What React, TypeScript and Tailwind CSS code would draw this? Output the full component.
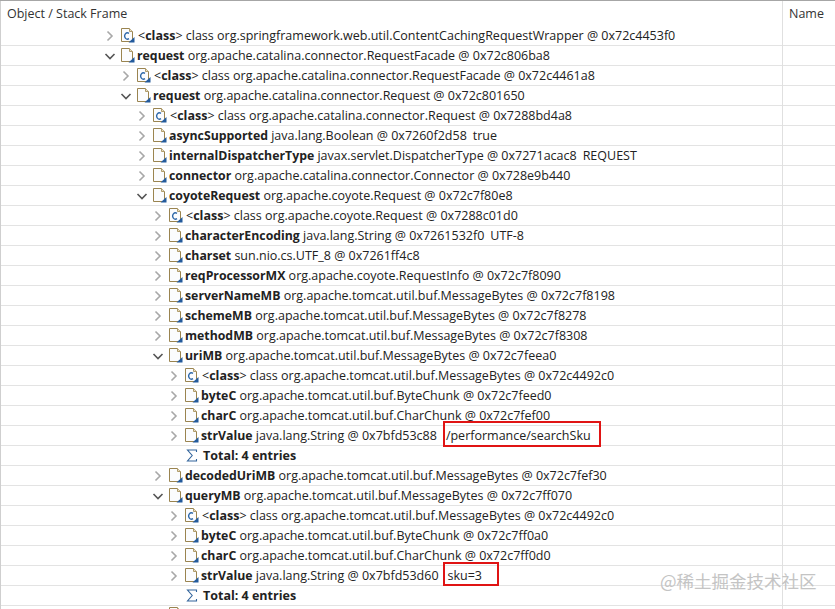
const depthClass: Record<number, string> = {
  0: "pl-[103px]",
  1: "pl-[119px]",
  2: "pl-[135px]",
  3: "pl-[151px]",
};

type Row = {
  d: number;
  k: "class" | "field" | "total";
  open?: boolean;
  name?: string;
  type?: string;
  value?: string;
  box?: "uri" | "sku";
};

const rows: Row[] = [
  { d: 0, k: "class", type: "class org.springframework.web.util.ContentCachingRequestWrapper @ 0x72c4453f0" },
  { d: 0, k: "field", open: true, name: "request", type: "org.apache.catalina.connector.RequestFacade @ 0x72c806ba8" },
  { d: 1, k: "class", type: "class org.apache.catalina.connector.RequestFacade @ 0x72c4461a8" },
  { d: 1, k: "field", open: true, name: "request", type: "org.apache.catalina.connector.Request @ 0x72c801650" },
  { d: 2, k: "class", type: "class org.apache.catalina.connector.Request @ 0x7288bd4a8" },
  { d: 2, k: "field", name: "asyncSupported", type: "java.lang.Boolean @ 0x7260f2d58", value: "true" },
  { d: 2, k: "field", name: "internalDispatcherType", type: "javax.servlet.DispatcherType @ 0x7271acac8", value: "REQUEST" },
  { d: 2, k: "field", name: "connector", type: "org.apache.catalina.connector.Connector @ 0x728e9b440" },
  { d: 2, k: "field", open: true, name: "coyoteRequest", type: "org.apache.coyote.Request @ 0x72c7f80e8" },
  { d: 3, k: "class", type: "class org.apache.coyote.Request @ 0x7288c01d0" },
  { d: 3, k: "field", name: "characterEncoding", type: "java.lang.String @ 0x7261532f0", value: "UTF-8" },
  { d: 3, k: "field", name: "charset", type: "sun.nio.cs.UTF_8 @ 0x7261ff4c8" },
  { d: 3, k: "field", name: "reqProcessorMX", type: "org.apache.coyote.RequestInfo @ 0x72c7f8090" },
  { d: 3, k: "field", name: "serverNameMB", type: "org.apache.tomcat.util.buf.MessageBytes @ 0x72c7f8198" },
  { d: 3, k: "field", name: "schemeMB", type: "org.apache.tomcat.util.buf.MessageBytes @ 0x72c7f8278" },
  { d: 3, k: "field", name: "methodMB", type: "org.apache.tomcat.util.buf.MessageBytes @ 0x72c7f8308" },
  { d: 3, k: "field", open: true, name: "uriMB", type: "org.apache.tomcat.util.buf.MessageBytes @ 0x72c7feea0" },
  { d: 4, k: "class", type: "class org.apache.tomcat.util.buf.MessageBytes @ 0x72c4492c0" },
  { d: 4, k: "field", name: "byteC", type: "org.apache.tomcat.util.buf.ByteChunk @ 0x72c7feed0" },
  { d: 4, k: "field", name: "charC", type: "org.apache.tomcat.util.buf.CharChunk @ 0x72c7fef00" },
  { d: 4, k: "field", name: "strValue", type: "java.lang.String @ 0x7bfd53c88", value: "/performance/searchSku", box: "uri" },
  { d: 4, k: "total", name: "Total: 4 entries" },
  { d: 3, k: "field", name: "decodedUriMB", type: "org.apache.tomcat.util.buf.MessageBytes @ 0x72c7fef30" },
  { d: 3, k: "field", open: true, name: "queryMB", type: "org.apache.tomcat.util.buf.MessageBytes @ 0x72c7ff070" },
  { d: 4, k: "class", type: "class org.apache.tomcat.util.buf.MessageBytes @ 0x72c4492c0" },
  { d: 4, k: "field", name: "byteC", type: "org.apache.tomcat.util.buf.ByteChunk @ 0x72c7ff0a0" },
  { d: 4, k: "field", name: "charC", type: "org.apache.tomcat.util.buf.CharChunk @ 0x72c7ff0d0" },
  { d: 4, k: "field", name: "strValue", type: "java.lang.String @ 0x7bfd53d60", value: "sku=3", box: "sku" },
  { d: 4, k: "total", name: "Total: 4 entries" },
];

function Chevron({ open }: { open?: boolean }) {
  return (
    <svg width="12" height="12" viewBox="0 0 12 12" className="shrink-0" fill="none">
      {open ? (
        <path d="M1.5 4 L6 8.5 L10.5 4" stroke="#555" strokeWidth="1.6" />
      ) : (
        <path d="M3.5 1.5 L8 6 L3.5 10.5" stroke="#a8a8a8" strokeWidth="1.6" />
      )}
    </svg>
  );
}

function DocIcon({ isClass }: { isClass?: boolean }) {
  return (
    <svg width="14" height="15" viewBox="0 0 14 15" className="shrink-0">
      <path d="M0.5 0.5 H8.5 L11.5 3.5 V13.5 H0.5 Z" fill="#fbfcfe" stroke="#9a8450" />
      <path d="M8.5 0.5 V3.5 H11.5" fill="#e8dfc6" stroke="#b09c6c" />
      {isClass && (
        <path d="M8 5.4 A2.8 3.1 0 1 0 8 10.6" fill="none" stroke="#2f68a8" strokeWidth="1.3" />
      )}
      <path d="M13.5 9 V14.5 H7.5 Z" fill="#235a9c" />
    </svg>
  );
}

function Sigma() {
  return (
    <svg width="12" height="13" viewBox="0 0 12 13" className="shrink-0" fill="none">
      <path d="M10.5 3 V1 H1.5 L6.2 6.5 L1.5 12 H10.5 V10" stroke="#33659c" strokeWidth="1.1" />
    </svg>
  );
}

function TreeRow({ r }: { r: Row }) {
  const pad = r.d === 4 ? "pl-[167px]" : depthClass[r.d];
  return (
    <div className={`h-5 flex items-center border-b border-[#e3e3e3] ${pad}`}>
      <div className="w-[16px] shrink-0 flex items-center">{r.k !== "total" && <Chevron open={r.open} />}</div>
      {r.k === "total" ? (
        <>
          <div className="ml-[2px] w-[12px] shrink-0 flex"><Sigma /></div>
          <span className="ml-[5px] font-bold pt-[1px]">{r.name}</span>
        </>
      ) : (
        <>
          <div className="ml-[1px] w-[14px] shrink-0 flex"><DocIcon isClass={r.k === "class"} /></div>
          {r.k === "class" ? (
            <span className="ml-[3px] whitespace-pre pt-[1px]">
              {"<"}
              <b>class</b>
              {"> "}
              {r.type}
            </span>
          ) : (
            <span className="ml-[2px] whitespace-pre pt-[1px]">
              <b className="text-[12.3px]">{r.name}</b> {r.type}
            </span>
          )}
          {r.value && (
            <span className={`relative whitespace-pre pt-[1px] ${r.box ? "ml-[9px]" : "ml-[6px]"}`}>
              {r.value}
              {r.box === "uri" && (
                <span className="absolute left-[-3px] top-[-4px] w-[158px] h-[26px] border-2 border-[#e01414]" />
              )}
              {r.box === "sku" && (
                <span className="absolute left-[-5px] top-[-3px] w-[56px] h-[24px] border-2 border-[#e01414]" />
              )}
            </span>
          )}
        </>
      )}
    </div>
  );
}

export default function App() {
  return (
    <div className="relative w-[835px] h-[609px] overflow-hidden bg-white text-[12.5px] leading-5 text-[#222] font-['Open_Sans','Liberation_Sans',sans-serif]">
      <div className="grid grid-cols-[782px_53px] h-full border-t border-[#a6a6a6]">
        <div className="min-w-0 overflow-hidden border-l border-[#cfcfcf]">
          <div className="h-[25px] pl-[6px] flex items-center text-[#333]">Object / Stack Frame</div>
          {rows.map((r, i) => (
            <TreeRow key={i} r={r} />
          ))}
          <div className="pl-[151px] pt-[1px] flex">
            <div className="ml-[17px]"><DocIcon /></div>
          </div>
        </div>
        <div className="border-l border-[#e0e0e0]">
          <div className="h-[25px] pl-[6px] flex items-center text-[#333]">Name</div>
          {rows.map((_, i) => (
            <div key={i} className="h-5 border-b border-[#e3e3e3]" />
          ))}
        </div>
      </div>
      <div className="absolute left-[660px] top-[569px] text-[17.5px] leading-6 text-[#c4c4c4] font-['Noto_Sans_CJK_SC','Noto_Sans',sans-serif]">@稀土掘金技术社区</div>
    </div>
  );
}
